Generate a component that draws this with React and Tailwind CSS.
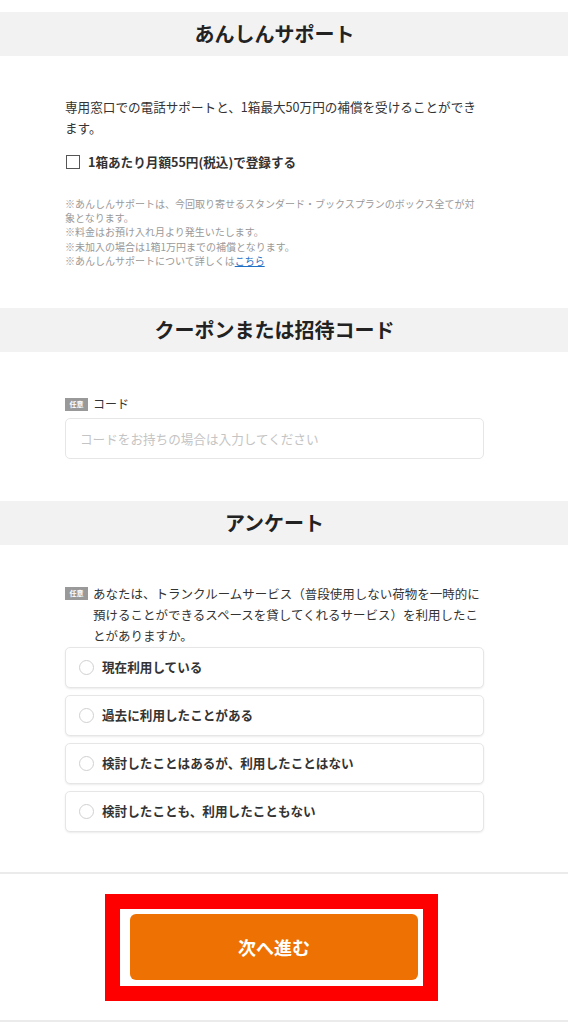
const font = { fontFamily: '"Noto Sans CJK JP", "Noto Sans", sans-serif' };

const options = [
  "現在利用している",
  "過去に利用したことがある",
  "検討したことはあるが、利用したことはない",
  "検討したことも、利用したこともない",
];

function SectionTitle({ children }) {
  return (
    <div className="flex h-[44px] items-center justify-center bg-[#f2f2f2] pr-[19px]">
      <h2 className="text-[20px] font-bold leading-none text-[#222]">{children}</h2>
    </div>
  );
}

function Badge() {
  return (
    <span className="flex h-[13px] w-[23px] shrink-0 items-center justify-center bg-[#999] text-[7px] font-bold leading-none text-white">
      任意
    </span>
  );
}

export default function App() {
  return (
    <div className="min-h-screen bg-white pt-[12px] text-[#333]" style={font}>
      {/* あんしんサポート */}
      <SectionTitle>あんしんサポート</SectionTitle>
      <div className="ml-[65px] w-[419px] pt-[40px] pb-[40px]">
        <p className="text-[12.6px] leading-[21px]">
          専用窓口での電話サポートと、1箱最大50万円の補償を受けることができます。
        </p>
        <label className="mt-[14px] flex h-[20px] items-center gap-[8px]">
          <span className="ml-[1px] h-[14px] w-[14px] border-[1.5px] border-[#555] bg-white" />
          <span className="text-[12.6px] font-bold text-[#333]">1箱あたり月額55円(税込)で登録する</span>
        </label>
        <div className="mt-[25px] text-[10px] leading-[14.2px] text-[#999]">
          <p>※あんしんサポートは、今回取り寄せるスタンダード・ブックスプランのボックス全てが対象となります。</p>
          <p>※料金はお預け入れ月より発生いたします。</p>
          <p>※未加入の場合は1箱1万円までの補償となります。</p>
          <p>
            ※あんしんサポートについて詳しくは
            <a href="#" className="text-[#1f6fc5] underline">こちら</a>
          </p>
        </div>
      </div>

      {/* クーポン */}
      <SectionTitle>クーポンまたは招待コード</SectionTitle>
      <div className="ml-[65px] w-[419px] pt-[44px] pb-[42px]">
        <div className="flex h-[16px] items-center gap-[5px]">
          <Badge />
          <span className="text-[12px] text-[#333]">コード</span>
        </div>
        <input
          type="text"
          placeholder="コードをお持ちの場合は入力してください"
          className="mt-[6px] h-[41px] w-full rounded-[5px] border border-[#e6e6e6] px-[14px] text-[12.6px] placeholder:text-[#c4c4c4] focus:outline-none"
          style={font}
        />
      </div>

      {/* アンケート */}
      <SectionTitle>アンケート</SectionTitle>
      <div className="ml-[65px] w-[419px] pt-[38px] pb-[40px]">
        <div className="flex items-start gap-[5px]">
          <div className="flex pt-[4px]">
            <Badge />
          </div>
          <p className="w-[392px] text-[12.5px] leading-[21px] text-[#333]">
            あなたは、トランクルームサービス（普段使用しない荷物を一時的に預けることができるスペースを貸してくれるサービス）を利用したことがありますか。
          </p>
        </div>
        <div className="mt-[1px] flex flex-col gap-[7px]">
          {options.map((o) => (
            <label
              key={o}
              className="flex h-[41px] items-center gap-[8px] rounded-[5px] border border-[#e6e6e6] bg-white px-[13px] shadow-[0_1px_2px_rgba(0,0,0,0.08)]"
            >
              <span className="h-[15px] w-[15px] rounded-full border-[1.5px] border-[#d0d0d0] bg-white" />
              <span className="text-[12.6px] font-bold text-[#333]">{o}</span>
            </label>
          ))}
        </div>
      </div>

      {/* ボタン */}
      <div className="border-t-2 border-[#ebebeb] pt-[20px] pb-[19px]">
        <div className="ml-[105px] w-[333px] border-[15px] border-[#ff0000] bg-white pt-[5px] pr-[5px] pb-[6px] pl-[10px]">
          <button
            className="flex h-[66px] w-full items-center justify-center rounded-[6px] bg-[#ee7203] text-[18px] font-bold text-white"
            style={font}
          >
            次へ進む
          </button>
        </div>
      </div>
      <div className="border-t-2 border-[#ebebeb]" />
    </div>
  );
}
